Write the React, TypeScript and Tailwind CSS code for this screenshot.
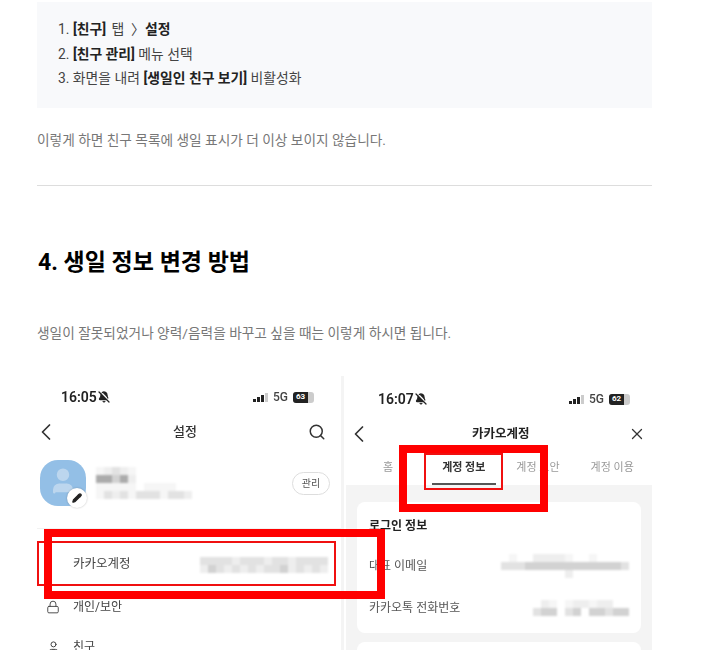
import { BellOff, ChevronLeft, Lock, Pencil, Search, User, X } from "lucide-react";

const shades: Record<string, string> = {
  "0": "bg-transparent",
  "1": "bg-[#f6f6f6]",
  "2": "bg-[#eeeeee]",
  "3": "bg-[#e2e2e2]",
  "4": "bg-[#d2d2d2]",
  "5": "bg-[#ababab]",
};

const Mosaic = ({ rows, cell = 8 }: { rows: string[]; cell?: number }) => (
  <div className="flex flex-col blur-[0.8px]">
    {rows.map((row, r) => (
      <div key={r} className="flex">
        {row.split("").map((c, i) => (
          <div key={i} className={shades[c]} style={{ width: cell, height: cell }} />
        ))}
      </div>
    ))}
  </div>
);

const StatusBar = ({ time, battery, bars }: { time: string; battery: string; bars: string }) => (
  <div className={`flex items-center ${bars}`}>
    <span className="text-[14px] font-semibold text-[#222]">{time}</span>
    <BellOff size={12} strokeWidth={2.5} className="ml-[1px] fill-current text-[#222]" />
    <div className="ml-auto flex items-end gap-[1px]">
      <div className="h-[3px] w-[3px] bg-[#222]" />
      <div className="h-[5px] w-[3px] bg-[#222]" />
      <div className="h-[7px] w-[3px] bg-[#222]" />
      <div className="h-[9px] w-[3px] bg-[#ccc]" />
    </div>
    <span className="ml-[5px] text-[12px] font-medium text-[#444]">5G</span>
    <div className="ml-[5px] flex h-[11px] w-[21px] overflow-hidden rounded-[3px] bg-[#ccc]">
      <div className="flex w-[15px] items-center justify-center bg-[#222] text-[8px] font-bold leading-none text-white">
        {battery}
      </div>
    </div>
  </div>
);

const LeftPhone = () => (
  <div className="h-full w-[304px] shrink-0 blur-[0.4px]">
    <StatusBar time="16:05" battery="63" bars="mt-[12px] h-[18px] pl-[24px] pr-[27px]" />
    <div className="mt-[14px] flex h-[24px] items-center pr-[15px]">
      <ChevronLeft size={28} strokeWidth={1.5} className="-ml-[5px] shrink-0 text-[#333]" />
      <span className="ml-[113px] text-[13px] font-medium text-[#333]">설정</span>
      <Search size={18} strokeWidth={2} className="ml-auto text-[#333]" />
    </div>
    <div className="mt-[14px] flex items-center pl-[3px] pr-[11px]">
      <div className="relative h-[46px] w-[46px] shrink-0 overflow-hidden rounded-[18px] bg-[#93bfe6]">
        <User size={30} strokeWidth={2} className="mx-auto mt-[6px] fill-current text-[#bcd6ee]" />
      </div>
      <div className="relative -ml-[19px] mt-[30px] flex h-[20px] w-[20px] shrink-0 items-center justify-center rounded-full bg-white shadow-[0_0_2px_#0004]">
        <Pencil size={10} strokeWidth={3} className="fill-current text-[#222]" />
      </div>
      <div className="ml-[9px]">
        <Mosaic rows={["123210000000", "554520000000", "111110111100", "132313331332"]} />
      </div>
      <div className="ml-auto flex h-[23px] w-[38px] items-center justify-center rounded-full border border-[#ddd] text-[10px] text-[#555]">
        관리
      </div>
    </div>
    <div className="mt-[20px] h-px bg-[#f2f2f2]" />
    <div className="mt-[13px] flex h-[45px] items-center pl-[36px] pr-[13px]">
      <span className="text-[12.5px] text-[#444]">카카오계정</span>
      <div className="ml-auto">
        <Mosaic rows={["3333233323323333", "2432323233423232"]} />
      </div>
    </div>
    <div className="mt-[7px] flex h-[26px] items-center pl-[9px]">
      <Lock size={14} strokeWidth={1.6} className="text-[#444]" />
      <span className="ml-[13px] text-[12px] text-[#444]">개인/보안</span>
    </div>
    <div className="mt-[14px] flex h-[26px] items-center pl-[9px]">
      <User size={15} strokeWidth={1.6} className="text-[#444]" />
      <span className="ml-[12px] text-[12px] text-[#444]">친구</span>
    </div>
  </div>
);

const RightPhone = () => (
  <div className="h-full w-[308px] shrink-0 blur-[0.4px]">
    <StatusBar time="16:07" battery="62" bars="mt-[14px] h-[18px] pl-[34px] pr-[22px]" />
    <div className="mt-[14px] flex h-[24px] items-center pl-[1px] pr-[6px]">
      <ChevronLeft size={28} strokeWidth={1.5} className="shrink-0 text-[#333]" />
      <span className="ml-[99px] text-[12.5px] font-semibold text-[#222]">카카오계정</span>
      <X size={18} strokeWidth={1.7} className="ml-auto text-[#333]" />
    </div>
    <div className="relative mt-[7px] flex h-[32px] items-center pb-[2px] text-[11px] text-[#999]">
      <span className="ml-[39px]">홈</span>
      <span className="ml-[49px] font-semibold text-[#333]">계정 정보</span>
      <span className="ml-[31px]">계정 보안</span>
      <span className="ml-[31px]">계정 이용</span>
      <div className="absolute bottom-0 left-[88px] h-[2px] w-[64px] bg-[#555]" />
    </div>
    <div className="ml-[2px] bg-[#f4f4f4] px-[11px] pt-[17px]">
      <div className="h-[131px] rounded-[8px] bg-white px-[12px] pt-[14px]">
        <p className="text-[12px] font-semibold leading-[20px] text-[#222]">로그인 정보</p>
        <div className="mt-[20px] flex h-[20px] items-center justify-between">
          <span className="text-[12px] text-[#555]">대표 이메일</span>
          <Mosaic rows={["0100222210010000", "3334444444444443", "0000000020000000"]} />
        </div>
        <div className="mt-[22px] flex h-[20px] items-center justify-between">
          <span className="text-[12px] text-[#555]">카카오톡 전화번호</span>
          <Mosaic rows={["0021012212200", "0344034044344"]} />
        </div>
      </div>
      <div className="mt-[9px] h-[40px] rounded-[8px] bg-white" />
    </div>
  </div>
);

export default function App() {
  return (
    <div className="h-[650px] w-[701px] overflow-hidden bg-white pl-[37px] font-['Roboto','Noto_Sans_CJK_KR',sans-serif]">
      <div className="w-[615px]">
        <div className="mt-[2px] h-[106px] bg-[#f8f9fb] pl-[21px] pt-[15px] text-[13.85px] leading-[24.5px] text-[#444]">
          <p>
            1. <b className="text-[#222]">[친구]</b> <span className="ml-[2px]">탭</span> &nbsp;〉
            <b className="text-[#222]">설정</b>
          </p>
          <p>2. <b className="text-[#222]">[친구 관리]</b> 메뉴 선택</p>
          <p>3. 화면을 내려 <b className="text-[#222]">[생일인 친구 보기]</b> 비활성화</p>
        </div>
        <p className="mt-[20px] text-[13.7px] leading-[24px] text-[#777]">
          이렇게 하면 친구 목록에 생일 표시가 더 이상 보이지 않습니다.
        </p>
        <div className="mt-[33px] h-px bg-[#ddd]" />
        <h2 className="mt-[59px] pl-px text-[23px] font-bold leading-[36px] text-black">
          4. 생일 정보 변경 방법
        </h2>
        <p className="mt-[40px] text-[13.7px] leading-[24px] text-[#777]">
          생일이 잘못되었거나 양력/음력을 바꾸고 싶을 때는 이렇게 하시면 됩니다.
        </p>
        <div className="relative mt-[31px] h-[274px]">
          <div className="flex h-full overflow-hidden">
            <LeftPhone />
            <div className="h-full w-[3px] shrink-0 bg-[#f4f4f4]" />
            <RightPhone />
          </div>
          <div className="absolute left-0 top-[165px] h-[45px] w-[299px] border-2 border-[#f01010]" />
          <div className="absolute left-[7px] top-[153px] h-[70px] w-[341px] border-[8px] border-[#ff0000]" />
          <div className="absolute left-[387px] top-[77px] h-[37px] w-[79px] border-2 border-[#f01010]" />
          <div className="absolute left-[362px] top-[69px] h-[67px] w-[149px] border-[8px] border-[#ff0000]" />
        </div>
      </div>
    </div>
  );
}
